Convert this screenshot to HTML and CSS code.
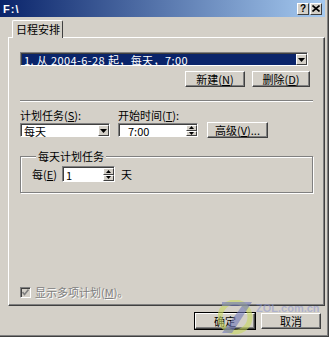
FILE: index.html
```html
<!doctype html>
<html lang="zh-CN">
<head>
    <meta charset="UTF-8">
    <meta name="viewport" content="width=device-width, initial-scale=1.0">
    <title>F:\</title>
    <link rel="stylesheet" href="styles.css">
</head>
<body>
    <div class="window">
        <div class="titlebar">
            <span class="title">F:\</span>
            <div class="caption-buttons">
                <span class="cap-btn">?</span>
                <span class="cap-btn">
                    <svg width="8" height="7" viewBox="0 0 8 7"><path d="M0.5 0.5 L7.5 6.5 M7.5 0.5 L0.5 6.5" stroke="#000" stroke-width="1.6"/></svg>
                </span>
            </div>
        </div>

        <div class="content">
            <div class="tabs">
                <span class="tab">日程安排</span>
            </div>

            <div class="panel">
                <div class="combo combo-wide selected">
                    <span class="field-text">1. 从 2004-6-28 起，每天，7:00</span>
                    <span class="drop-btn"><svg width="7" height="4" viewBox="0 0 7 4"><path d="M0 0 H7 L3.5 4 Z" fill="#000"/></svg></span>
                </div>

                <div class="button-row">
                    <button class="btn btn-new">新建(<u>N</u>)</button>
                    <button class="btn btn-del">删除(<u>D</u>)</button>
                </div>

                <div class="separator"></div>

                <div class="label-row">
                    <span class="label label-task">计划任务(<u>S</u>):</span>
                    <span class="label">开始时间(<u>T</u>):</span>
                </div>

                <div class="control-row">
                    <div class="combo combo-task">
                        <span class="field-text">每天</span>
                        <span class="drop-btn"><svg width="7" height="4" viewBox="0 0 7 4"><path d="M0 0 H7 L3.5 4 Z" fill="#000"/></svg></span>
                    </div>
                    <div class="spinner spinner-time">
                        <span class="field-text time-text">7:00</span>
                        <span class="spin-btns">
                            <span class="spin-btn"><svg width="5" height="3" viewBox="0 0 5 3"><path d="M0 3 H5 L2.5 0 Z" fill="#000"/></svg></span>
                            <span class="spin-btn"><svg width="5" height="3" viewBox="0 0 5 3"><path d="M0 0 H5 L2.5 3 Z" fill="#000"/></svg></span>
                        </span>
                    </div>
                    <button class="btn btn-advanced">高级(<u>V</u>)...</button>
                </div>

                <fieldset class="group">
                    <legend>每天计划任务</legend>
                    <div class="group-row">
                        <span class="label label-every">每(<u>E</u>)</span>
                        <div class="spinner spinner-days">
                            <span class="field-text">1</span>
                            <span class="spin-btns">
                                <span class="spin-btn"><svg width="5" height="3" viewBox="0 0 5 3"><path d="M0 3 H5 L2.5 0 Z" fill="#000"/></svg></span>
                                <span class="spin-btn"><svg width="5" height="3" viewBox="0 0 5 3"><path d="M0 0 H5 L2.5 3 Z" fill="#000"/></svg></span>
                            </span>
                        </div>
                        <span class="label">天</span>
                    </div>
                </fieldset>

                <div class="check-row">
                    <span class="checkbox"><svg width="7" height="7" viewBox="0 0 7 7"><path d="M0.5 3 L2.5 5.5 L6.5 0.5" stroke="#808080" stroke-width="1.6" fill="none"/></svg></span>
                    <span class="disabled-text">显示多项计划(<u>M</u>)。</span>
                </div>
            </div>

            <div class="footer">
                <button class="btn btn-default">确定</button>
                <button class="btn">取消</button>
            </div>
        </div>

        <!-- site watermark over the corner -->
        <div class="watermark">
            <svg width="38" height="35" viewBox="0 0 38 35">
                <circle cx="17" cy="17" r="15" fill="none" stroke="#c8d860" stroke-width="5" opacity="0.6"/>
                <path d="M4 2 H34 L14 33 H4 L24 6 H4 Z" fill="#6f78b8" opacity="0.6"/>
            </svg>
            <span class="wm-site">ZOL.com.cn</span>
        </div>
    </div>
</body>
</html>
```

FILE: styles.css
```css
body {
    margin: 0;
    background-color: #d4d0c8;
    color: #000;
    font-family: "Noto Sans CJK SC", "Liberation Sans", sans-serif;
    font-size: 11px;
}

.window {
    position: relative;
    width: 329px;
    height: 337px;
    box-sizing: border-box;
    display: flex;
    flex-direction: column;
    padding: 0 3px 3px 0;
    border-right: 1px solid #404040;
    border-bottom: 1px solid #404040;
    box-shadow: inset -1px -1px #808080;
    overflow: hidden;
}

.titlebar {
    height: 17px;
    display: flex;
    align-items: center;
    justify-content: space-between;
    padding: 0 3px 0 3px;
    background: linear-gradient(to right, #0a246a, #a6caf0);
}

.title {
    color: white;
    font-family: "Liberation Sans", sans-serif;
    font-weight: bold;
    font-size: 11px;
    letter-spacing: 1px;
}

.caption-buttons {
    display: flex;
    gap: 1px;
}

.cap-btn {
    width: 10px;
    height: 10px;
    display: flex;
    align-items: center;
    justify-content: center;
    background-color: #d4d0c8;
    border: 1px solid;
    border-color: #fff #404040 #404040 #fff;
    font-family: "Liberation Sans", sans-serif;
    font-weight: bold;
    font-size: 10px;
    line-height: 10px;
}

.content {
    flex: 1;
    display: flex;
    flex-direction: column;
    padding: 3px 0 0 8px;
}

.tabs {
    display: flex;
    padding-left: 4px;
}

.tab {
    position: relative;
    z-index: 1;
    margin-bottom: -1px;
    padding: 1px 2px 2px 3px;
    line-height: 14px;
    background-color: #d4d0c8;
    border: 1px solid;
    border-bottom: none;
    border-color: #fff #404040 #fff #fff;
    border-radius: 2px 2px 0 0;
}

.panel {
    flex: 1;
    display: flex;
    flex-direction: column;
    padding: 14px 11px 7px 11px;
    border: 1px solid;
    border-color: #fff #404040 #404040 #fff;
    box-shadow: inset -1px -1px #808080;
}

/* sunken edit / combo fields */
.combo,
.spinner {
    height: 14px;
    box-sizing: border-box;
    display: flex;
    align-items: stretch;
    background-color: white;
    border: 1px solid;
    border-color: #808080 #fff #fff #808080;
    box-shadow: inset 1px 1px #404040;
    padding: 1px 0 0 1px;
}

.field-text {
    flex: 1;
    display: flex;
    align-items: center;
    padding-left: 2px;
    white-space: nowrap;
}

.combo-wide {
    width: 288px;
}

.combo-wide .field-text {
    letter-spacing: 0.4px;
}

.selected .field-text {
    background-color: #0a246a;
    color: white;
}

.drop-btn {
    width: 9px;
    display: flex;
    align-items: center;
    justify-content: center;
    background-color: #d4d0c8;
    border: 1px solid;
    border-color: #fff #404040 #404040 #fff;
}

.spin-btns {
    width: 11px;
    display: flex;
    flex-direction: column;
}

.spin-btn {
    flex: 1;
    display: flex;
    align-items: center;
    justify-content: center;
    background-color: #d4d0c8;
    border: 1px solid;
    border-color: #fff #404040 #404040 #fff;
}

.btn {
    height: 16px;
    width: 60px;
    padding: 0;
    background-color: #d4d0c8;
    border: 1px solid;
    border-color: #fff #404040 #404040 #fff;
    box-shadow: inset -1px -1px #808080;
    font-family: inherit;
    font-size: 11px;
    line-height: 12px;
    color: #000;
}

.button-row {
    display: flex;
    justify-content: flex-end;
    gap: 7px;
    margin-top: 5px;
    padding-right: 3px;
}

.btn-del {
    width: 58px;
}

.separator {
    margin-top: 13px;
    border-top: 1px solid #808080;
    border-bottom: 1px solid #fff;
}

.label-row {
    display: flex;
    margin-top: 7px;
    line-height: 12px;
}

.label-task {
    width: 98px;
}

.control-row {
    display: flex;
    align-items: center;
    height: 16px;
    margin-top: 1px;
}

.combo-task {
    width: 90px;
    margin-right: 8px;
}

.spinner-time {
    width: 80px;
    margin-right: 9px;
}

.time-text {
    padding-left: 8px;
}

.btn-advanced {
    width: 61px;
}

.group {
    margin: 12px 0 0 0;
    padding: 4px 0 10px 11px;
    border: 1px solid #808080;
    box-shadow: inset 1px 1px #fff, 1px 1px #fff;
}

.group legend {
    margin-left: 4px;
    padding: 0 2px;
    line-height: 12px;
    background-color: #d4d0c8;
}

.group-row {
    display: flex;
    align-items: center;
    height: 16px;
}

.label-every {
    width: 30px;
}

.spinner-days {
    width: 53px;
    height: 16px;
    margin-right: 6px;
}

.check-row {
    display: flex;
    align-items: center;
    gap: 4px;
    margin-top: auto;
    line-height: 12px;
}

.checkbox {
    width: 11px;
    height: 11px;
    box-sizing: border-box;
    display: flex;
    align-items: center;
    justify-content: center;
    background-color: #d4d0c8;
    border: 1px solid;
    border-color: #808080 #fff #fff #808080;
    box-shadow: inset 1px 1px #404040;
}

.disabled-text {
    color: #808080;
    text-shadow: 1px 1px #fff;
}

.footer {
    display: flex;
    justify-content: flex-end;
    gap: 6px;
    margin-top: 7px;
    padding: 0 4px 4px 0;
}

.btn-default {
    outline: 1px solid #000;
    outline-offset: 0;
}

.watermark {
    position: absolute;
    left: 218px;
    top: 300px;
    display: flex;
    align-items: flex-start;
    pointer-events: none;
}

.wm-site {
    margin-top: 3px;
    font-family: "Liberation Sans", sans-serif;
    font-weight: bold;
    font-size: 11px;
    line-height: 11px;
    color: rgba(140, 150, 210, 0.55);
}
```
